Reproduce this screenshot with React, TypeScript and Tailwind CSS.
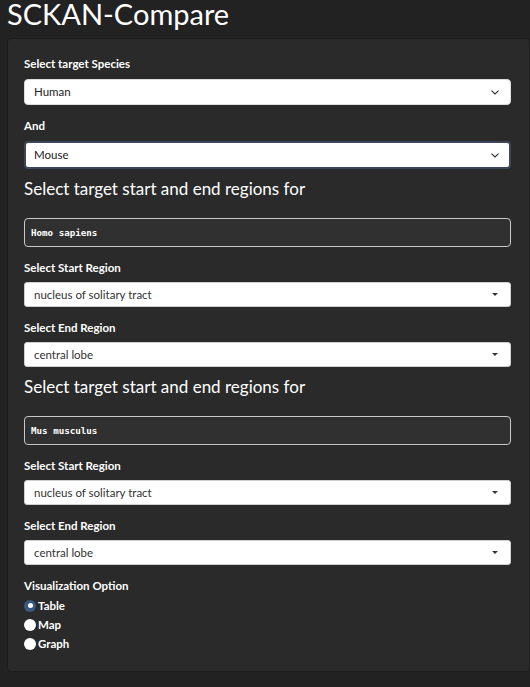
import { useState } from 'react';

const font = { fontFamily: 'Lato, "Open Sans", sans-serif' };

function NativeSelect({ value, focused }: { value: string; focused?: boolean }) {
  return (
    <div
      className={
        focused
          ? 'flex h-[28px] items-center justify-between rounded-[4px] border-2 border-[#3b4758] bg-white pl-[8px] pr-[10px]'
          : 'flex h-[26px] items-center justify-between rounded-[4px] border border-[#dcdcdc] bg-white pl-[9px] pr-[11px]'
      }
    >
      <span className="text-[11.5px] text-[#222]">{value}</span>
      <svg width="8" height="5" viewBox="0 0 8 5" fill="none">
        <path d="M0.8 0.8l3.2 3.2 3.2-3.2" stroke="#333" strokeWidth="1.1" strokeLinecap="round" strokeLinejoin="round" />
      </svg>
    </div>
  );
}

function Selectize({ value }: { value: string }) {
  return (
    <div className="flex h-[25px] items-center justify-between rounded-[3px] border border-[#cfcfcf] bg-white pl-[9px] pr-[12px]">
      <span className="text-[11.5px] text-[#333]">{value}</span>
      <span className="h-0 w-0 border-x-[3px] border-t-[3px] border-x-transparent border-t-[#333]" />
    </div>
  );
}

function Label({ children, className = '' }: { children: React.ReactNode; className?: string }) {
  return <div className={'text-[11.5px] font-bold leading-[17px] text-white ' + className}>{children}</div>;
}

function RegionBlock({ species }: { species: string }) {
  return (
    <>
      <h3 className="mt-[9px] text-[17px] leading-[22px] text-white">Select target start and end regions for</h3>
      <div className="mt-[18px] flex h-[29px] items-center rounded-[4px] border border-[#c8c8c8] bg-[#303030] px-[6px]">
        <span className="text-[9.2px] font-bold text-white" style={{ fontFamily: '"DejaVu Sans Mono", monospace' }}>
          {species}
        </span>
      </div>
      <Label className="mt-[12px]">Select Start Region</Label>
      <div className="mt-[6px]">
        <Selectize value="nucleus of solitary tract" />
      </div>
      <Label className="mt-[12px]">Select End Region</Label>
      <div className="mt-[6px]">
        <Selectize value="central lobe" />
      </div>
    </>
  );
}

export default function App() {
  const [viz, setViz] = useState('Table');

  return (
    <div className="min-h-[687px] bg-[#222222] pb-[17px]" style={font}>
      <h1 className="h-[38px] pl-[7px] text-[29px] leading-[27px] text-white">SCKAN-Compare</h1>
      <div className="ml-[7px] rounded-[4px] border border-[#1c1c1c] bg-[#2a2a2a] pb-[18px] pl-[16px] pr-[18px] pt-[16px]">
        <Label>Select target Species</Label>
        <div className="mt-[7px]">
          <NativeSelect value="Human" />
        </div>
        <Label className="mt-[12px]">And</Label>
        <div className="mt-[7px]">
          <NativeSelect value="Mouse" focused />
        </div>
        <RegionBlock species="Homo sapiens" />
        <RegionBlock species="Mus musculus" />
        <Label className="mt-[12px]">Visualization Option</Label>
        <div className="mt-[2px] flex flex-col">
          {['Table', 'Map', 'Graph'].map((opt) => (
            <label key={opt} className="flex h-[19px] cursor-pointer items-center gap-[2px]" onClick={() => setViz(opt)}>
              {viz === opt ? (
                <span className="flex h-[12px] w-[12px] items-center justify-center rounded-full bg-[#375a7f]">
                  <span className="h-[5px] w-[5px] rounded-full bg-white" />
                </span>
              ) : (
                <span className="h-[12px] w-[12px] rounded-full bg-white" />
              )}
              <span className="text-[11.5px] font-bold text-white">{opt}</span>
            </label>
          ))}
        </div>
      </div>
    </div>
  );
}
